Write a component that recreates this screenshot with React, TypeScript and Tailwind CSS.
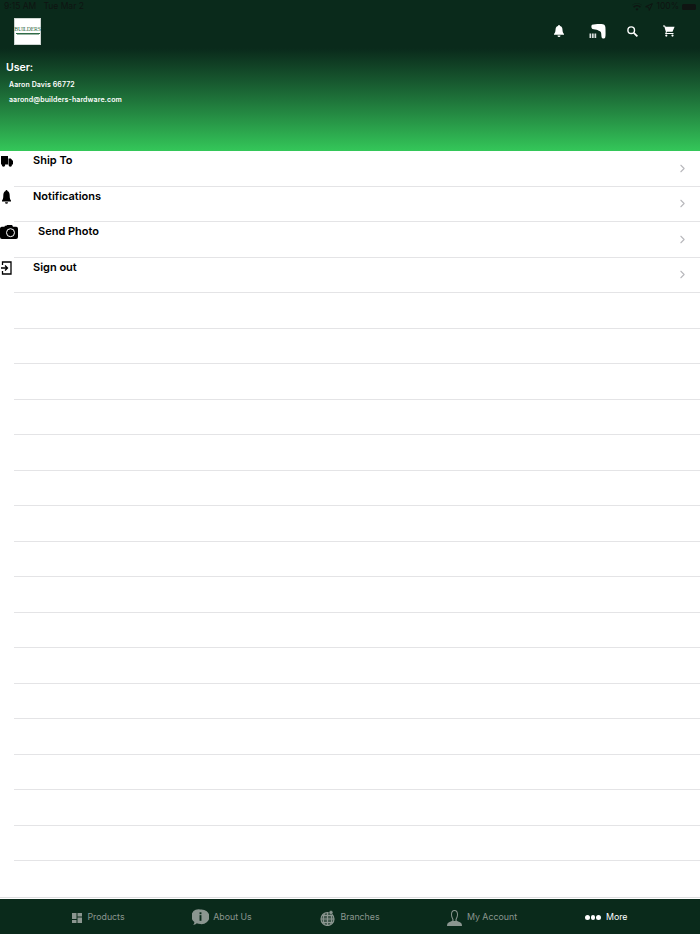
import { ChevronRight } from "lucide-react";

const rows = Array.from({ length: 20 });

function Row({ icon, label, indent }: { icon?: React.ReactNode; label?: string; indent?: string }) {
  return (
    <div className="relative h-[35.53px] shrink-0">
      <div className="absolute left-[14px] right-0 bottom-0 h-px bg-[#e4e4e6]" />
      {label && (
        <>
          <div className="absolute left-0 top-0 w-[20px] h-[20px] flex items-center justify-start">{icon}</div>
          <span className={`absolute top-0 text-[11px] font-semibold leading-[19px] text-black ${indent}`}>{label}</span>
          <ChevronRight className="absolute right-[11px] top-[10.500px] text-[#b8b8bc]" size={13} strokeWidth={2} />
        </>
      )}
    </div>
  );
}

function Tab({ icon, label, active, w, gap }: { icon: React.ReactNode; label: string; active?: boolean; w: string; gap: string }) {
  return (
    <div className={`flex items-center justify-center ${gap} ${w} ${active ? "text-white" : "text-[#8b9690]"}`}>
      {icon}
      <span className="text-[8.8px] leading-none">{label}</span>
    </div>
  );
}

export default function App() {
  return (
    <div className="w-[700px] h-[934px] bg-white flex flex-col overflow-hidden" style={{ fontFamily: "Inter, 'Liberation Sans', sans-serif" }}>
      <header className="h-[151px] shrink-0 bg-gradient-to-b from-[#0a2a1b] via-[#0a2a1b] via-[32%] to-[#34c759] text-white flex flex-col">
        <div className="h-[13px] flex items-center justify-between px-[4px] text-[#0f1412] text-[8.5px]">
          <span>9:15 AM&nbsp;&nbsp; Tue Mar 2</span>
          <div className="flex items-center gap-[3px]">
            <svg width="10" height="8" viewBox="0 0 24 18" fill="#0f1412"><path d="M12 18l-3.5-4a5 5 0 017 0zM5 10.500a10 10 0 0114 0l2.500-2.800a14 14 0 00-19 0zM0 5.200a17.500 17.500 0 0124 0L22 3a20 20 0 00-20 0z" /></svg>
            <svg width="8" height="8" viewBox="0 0 24 24" fill="none" stroke="#0f1412" strokeWidth="3"><path d="M22 2L2 11l9 2 2 9z" /></svg>
            <span>100%</span>
            <div className="w-[14px] h-[6px] rounded-[1.5px] bg-[#0f1412]" />
          </div>
        </div>
        <div className="h-[36px] flex items-center">
          <div className="ml-[14px] w-[27px] h-[27px] bg-white flex flex-col items-center justify-center shrink-0 border border-[#cfd6d2]">
            <span className="text-[#2f6b46] text-[5.800px] leading-none tracking-[-0.25px]" style={{ fontFamily: "'Liberation Serif', serif" }}>BUILDERS</span>
            <span className="w-[24px] h-[1px] bg-[#2f6b46] mt-[0.500px]" />
            <span className="w-[22px] h-[1px] bg-[#9ab5a5] mt-[0.500px]" />
          </div>
          <div className="ml-auto flex items-center mr-[25px]">
            <svg width="12" height="12" viewBox="0 0 12 12" fill="white"><path d="M6 0a1 1 0 011 1c2 .5 2.500 2.200 2.500 4 0 2 .8 3 1.500 4v.7H1V9c.7-1 1.500-2 1.500-4 0-1.800.5-3.500 2.500-4a1 1 0 011-1zM4.500 10.500h3a1.500 1.500 0 01-3 0z" /></svg>
            <svg className="ml-[24px]" width="17" height="15" viewBox="0 0 17 15" fill="white"><path d="M3 .8C6 .1 11-.2 14 .3c2 .3 2.500 2 2.500 5 0 3 .3 6-.3 8.200-.4 1.200-3 1.300-3.500 0-.5-1.500-.2-4-.9-5.500-.5-1-2-1.200-2.800-1.800C7.500 5.500 5 5.500 3.500 5 2.200 4 2 1.500 3 .8z" /><path d="M.5 9.500h1.700v4.500H.5zM3 9.500h1.700v4.500H3zM5.500 9.500h1.700v4.500H5.500z" opacity=".85" /></svg>
            <svg className="ml-[21px]" width="11" height="11" viewBox="0 0 11 11" fill="none" stroke="white" strokeWidth="1.400"><circle cx="4.200" cy="4.200" r="3.300" /><path d="M6.800 6.800l3.600 3.600" strokeWidth="1.800" /></svg>
            <svg className="ml-[25px]" width="12" height="12" viewBox="0 0 12 12" fill="white"><path d="M0 .5h2l.6 1.200h9L9.500 6.700H4L3.400 8h7.100v1H2l.9-2L1.300 1.500H0z" /><circle cx="3.300" cy="10.600" r="1.100" /><circle cx="9.500" cy="10.600" r="1.100" /></svg>
          </div>
        </div>
        <div className="pl-[6px] mt-[12px]">
          <div className="text-[10.5px] font-semibold leading-[14px]">User:</div>
          <div className="pl-[3px] mt-[4px] text-[7px] font-semibold leading-[11px] tracking-[0.1px]">Aaron Davis 66772</div>
          <div className="pl-[3px] mt-[4px] text-[7px] font-semibold leading-[11px] tracking-[0.1px]">aarond@builders-hardware.com</div>
        </div>
      </header>
      <main className="flex-1 flex flex-col">
        <Row label="Ship To" indent="left-[33px]" icon={
          <svg className="ml-[1px]" width="12" height="11" viewBox="0 0 12 11" fill="black"><path d="M0 0h7v8.500H0zM7.500 2.500h2.300L12 5v3.500H7.500z" /><circle cx="2.500" cy="9" r="1.700" /><circle cx="9.300" cy="9" r="1.700" /></svg>
        } />
        <Row label="Notifications" indent="left-[33px]" icon={
          <svg className="ml-[2px]" width="9" height="14" viewBox="0 0 9 14" fill="black"><path d="M4.500 0a.9.9 0 01.9 1c2 .6 2.300 3 2.300 5 0 2.200.5 3.500 1.300 4.500v1H0v-1C.8 9.500 1.300 8.200 1.300 6c0-2 .3-4.400 2.300-5a.9.9 0 01.9-1zM3 12.300h3a1.500 1.500 0 01-3 0z" /></svg>
        } />
        <Row label="Send Photo" indent="left-[38px]" icon={
          <svg width="18" height="14" viewBox="0 0 18 14"><path d="M2.500 1.800h2l.4-1h1.600l.5-1h5l1 2h3.200A2 2 0 0118 3.800V12a2 2 0 01-2 2H2a2 2 0 01-2-2V3.500a2 2 0 012.500-1.700z" fill="black" /><circle cx="10.500" cy="7.700" r="4" fill="none" stroke="white" strokeWidth="1" /></svg>
        } />
        <Row label="Sign out" indent="left-[33px]" icon={
          <svg className="ml-[1px]" width="11" height="14" viewBox="0 0 11 14" fill="none" stroke="black" strokeWidth="1.300"><path d="M1.500 4V1h8.500v12H1.500v-3M0 7h6.500M4 4.500L6.500 7 4 9.500" /></svg>
        } />
        {rows.slice(4, 20).map((_, i) => <Row key={i} />)}
        <div className="flex-1" />
      </main>
      <div className="h-px bg-[#dedee0] mb-[1px]" />
      <footer className="h-[35px] shrink-0 bg-[#0a2a1b] flex items-center pl-[36px] pt-[2px]">
        <Tab w="w-[125px]" gap="gap-[5px]" label="Products" icon={
          <svg width="10" height="10" viewBox="0 0 10 10" fill="#8b9690"><path d="M0 0h4.500v6H0zM5.500 0H10v3.500H5.500zM5.500 4.500H10V10H5.500zM0 7h4.500v3H0z" /></svg>
        } />
        <Tab w="w-[122px]" gap="gap-[4px]" label="About Us" icon={
          <svg width="17" height="17" viewBox="0 0 18 17"><path d="M9 0a8.500 7.800 0 110 15.500c-1.500 0-3-.3-4-.8-1 1-2.500 1.700-4 1.800 1-.8 1.500-2 1.500-3.200A7.500 7.500 0 019 0z" fill="#8b9690" /><rect x="8" y="3" width="2" height="2" fill="#0a2a1b" /><rect x="8" y="6" width="2" height="6" fill="#0a2a1b" /></svg>
        } />
        <Tab w="w-[134px]" gap="gap-[5px]" label="Branches" icon={
          <svg width="15" height="16" viewBox="0 0 15 16" fill="none" stroke="#8b9690" strokeWidth="1.200"><circle cx="7.500" cy="9" r="6.500" fill="#8b9690" fillOpacity=".4" /><path d="M1 9h13M2 5.500h11M2 12.500h11M7.500 2.500v13M4.500 3.500c-1.500 3-1.500 8 0 11M10.500 3.500c1.500 3 1.500 8 0 11" /><circle cx="11" cy="2.500" r="2" fill="#8b9690" stroke="#0a2a1b" strokeWidth=".5" /></svg>
        } />
        <Tab w="w-[130px]" gap="gap-[5px]" label="My Account" icon={
          <svg width="15" height="16" viewBox="0 0 15 16" fill="#8b9690"><path fillRule="evenodd" d="M7.500 0C10 0 11 2 11 4.500S9.800 8.500 9.500 10c0 1 1 1.300 3 2s2.500 2 2.500 4H0c0-2 .5-3.300 2.500-4s3-1 3-2C5.200 8.500 4 7 4 4.500S5 0 7.500 0zm0 1C5.800 1 5 2.500 5 4.500S6 8 6.500 9.500v1.500h2V9.500C9 8 10 6.500 10 4.500S9.200 1 7.500 1z" /></svg>
        } />
        <Tab w="w-[119px]" gap="gap-[5px]" active label="More" icon={
          <div className="flex gap-[1px]"><i className="w-[4.500px] h-[4.500px] rounded-full bg-white" /><i className="w-[4.500px] h-[4.500px] rounded-full bg-white" /><i className="w-[4.500px] h-[4.500px] rounded-full bg-white" /></div>
        } />
      </footer>
    </div>
  );
}
